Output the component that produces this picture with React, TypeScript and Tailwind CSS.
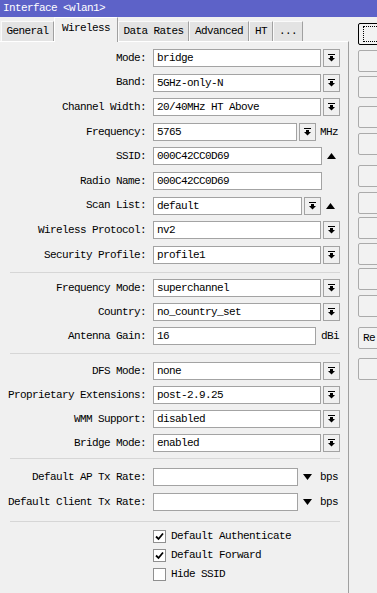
import React from 'react';

const FONT = "font-['Liberation_Mono',monospace] text-[11px] tracking-[-0.6px]";

const TABS = [
  { label: 'General', width: 'w-[53px]' },
  { label: 'Wireless', width: 'w-[64px]', active: true },
  { label: 'Data Rates', width: 'w-[71px]' },
  { label: 'Advanced', width: 'w-[60px]' },
  { label: 'HT', width: 'w-[24px]' },
  { label: '...', width: 'w-[30px]' },
];

// right-hand button column; only the start of "Reset" fits inside the window
const SIDE_BUTTONS = [
  { name: 'OK', mt: 'mt-[6px]', focused: true },
  { name: 'Cancel', mt: 'mt-[5px]' },
  { name: 'Apply', mt: 'mt-[4px]' },
  { name: 'Disable', mt: 'mt-[8px]' },
  { name: 'Comment', mt: 'mt-[5px]' },
  { name: 'Advanced Mode', mt: 'mt-[10px]' },
  { name: 'Torch', mt: 'mt-[5px]' },
  { name: 'Scan', mt: 'mt-[3px]' },
  { name: 'Freq. Usage', mt: 'mt-[4px]' },
  { name: 'Align', mt: 'mt-[3px]' },
  { name: 'Sniff', mt: 'mt-[5px]' },
  { name: 'Reset Configuration', mt: 'mt-[10px]', text: 'Re' },
  { name: 'Snooper', mt: 'mt-[9px]' },
];

const DropIcon = () => (
  <svg width="7" height="8" viewBox="0 0 7 8">
    <rect x="0" y="0" width="7" height="1" fill="#000" />
    <rect x="2" y="2" width="3" height="2" fill="#000" />
    <polygon points="0,4 7,4 3.5,7.5" fill="#000" />
  </svg>
);

const UpTriangle = () => (
  <svg width="9" height="6" viewBox="0 0 9 6">
    <polygon points="4.5,0 9,6 0,6" fill="#000" />
  </svg>
);

const DownTriangle = () => (
  <svg width="9" height="6" viewBox="0 0 9 6">
    <polygon points="0,0 9,0 4.5,6" fill="#000" />
  </svg>
);

const Row: React.FC<{ label: string; children: React.ReactNode }> = ({ label, children }) => (
  <div className="flex items-center h-[18px]">
    <div className="w-[146px] shrink-0 text-right whitespace-nowrap">{label}:</div>
    <div className="ml-[7px] flex items-center">{children}</div>
  </div>
);

const Field: React.FC<{ value?: string; width: string }> = ({ value = '', width }) => (
  <div className={`${width} h-[18px] border border-[#a3a3a3] bg-white pl-[3px] leading-[16px] whitespace-nowrap overflow-hidden`}>
    {value}
  </div>
);

const DropButton = () => (
  <div className="ml-[2px] w-[17px] h-[18px] border border-[#a3a3a3] bg-[#f0f0f0] flex items-center justify-center">
    <DropIcon />
  </div>
);

const Select: React.FC<{ value: string }> = ({ value }) => (
  <>
    <Field value={value} width="w-[168px]" />
    <DropButton />
  </>
);

const Separator: React.FC<{ className: string }> = ({ className }) => (
  <div className={`ml-[10px] w-[330px] h-px bg-[#d6d6d6] ${className}`} />
);

const Checkbox: React.FC<{ label: string; checked?: boolean }> = ({ label, checked }) => (
  <div className="flex items-center h-[13px] pl-[153px]">
    <div className="w-[13px] h-[13px] border border-[#8f8f8f] bg-white flex items-center justify-center">
      {checked && (
        <svg width="9" height="9" viewBox="0 0 9 9">
          <path d="M1 4.5 L3.5 7 L8 1.5" stroke="#000" strokeWidth="1.8" fill="none" />
        </svg>
      )}
    </div>
    <span className="ml-[5px] whitespace-nowrap">{label}</span>
  </div>
);

export default function App() {
  return (
    <div className={`w-[377px] h-[593px] overflow-hidden bg-[#f0f0f0] text-black ${FONT}`}>
      <div className="h-[17px] bg-[#5d62c8] text-white pl-[3px] leading-[17px] whitespace-nowrap">
        Interface &lt;wlan1&gt;
      </div>

      <div className="flex">
        <div className="w-[349px] shrink-0">
          {/* tab strip */}
          <div className="h-[24px] flex items-end pl-[1px]">
            {TABS.map(tab =>
              tab.active ? (
                <div
                  key={tab.label}
                  className={`${tab.width} h-[25px] -mb-px relative z-10 bg-[#f0f0f0] border-l border-t border-white border-r border-r-[#a0a0a0] flex items-center justify-center pb-[3px] whitespace-nowrap`}
                >
                  {tab.label}
                </div>
              ) : (
                <div
                  key={tab.label}
                  className={`${tab.width} h-[20px] bg-[#e3e3e3] border-l border-t border-[#fafafa] border-r border-r-[#a0a0a0] flex items-center justify-center whitespace-nowrap`}
                >
                  {tab.label}
                </div>
              )
            )}
          </div>

          {/* tab panel */}
          <div className="h-[552px] border-t border-white border-r border-r-[#a0a0a0] pt-[7px]">
            <div className="flex flex-col gap-[6.6px]">
              <Row label="Mode"><Select value="bridge" /></Row>
              <Row label="Band"><Select value="5GHz-only-N" /></Row>
              <Row label="Channel Width"><Select value="20/40MHz HT Above" /></Row>
              <Row label="Frequency">
                <Field value="5765" width="w-[144px]" />
                <DropButton />
                <span className="ml-[4px]">MHz</span>
              </Row>
              <Row label="SSID">
                <Field value="000C42CC0D69" width="w-[169px]" />
                <span className="ml-[5px] flex"><UpTriangle /></span>
              </Row>
              <Row label="Radio Name"><Field value="000C42CC0D69" width="w-[169px]" /></Row>
              <Row label="Scan List">
                <Field value="default" width="w-[149px]" />
                <DropButton />
                <span className="ml-[5px] flex"><UpTriangle /></span>
              </Row>
              <Row label="Wireless Protocol"><Select value="nv2" /></Row>
              <Row label="Security Profile"><Select value="profile1" /></Row>
            </div>

            <Separator className="mt-[8px] mb-[6px]" />

            <div className="flex flex-col gap-[6px]">
              <Row label="Frequency Mode"><Select value="superchannel" /></Row>
              <Row label="Country"><Select value="no_country_set" /></Row>
              <Row label="Antenna Gain">
                <Field value="16" width="w-[163px]" />
                <span className="ml-[5px]">dBi</span>
              </Row>
            </div>

            <Separator className="mt-[8px] mb-[8px]" />

            <div className="flex flex-col gap-[6px]">
              <Row label="DFS Mode"><Select value="none" /></Row>
              <Row label="Proprietary Extensions"><Select value="post-2.9.25" /></Row>
              <Row label="WMM Support"><Select value="disabled" /></Row>
              <Row label="Bridge Mode"><Select value="enabled" /></Row>
            </div>

            <Separator className="mt-[6px] mb-[9px]" />

            <div className="flex flex-col gap-[7px]">
              <Row label="Default AP Tx Rate">
                <Field width="w-[145px]" />
                <span className="ml-[5px] flex"><DownTriangle /></span>
                <span className="ml-[8px]">bps</span>
              </Row>
              <Row label="Default Client Tx Rate">
                <Field width="w-[145px]" />
                <span className="ml-[5px] flex"><DownTriangle /></span>
                <span className="ml-[8px]">bps</span>
              </Row>
            </div>

            <Separator className="mt-[10px] mb-[8px]" />

            <div className="flex flex-col gap-[6px]">
              <Checkbox label="Default Authenticate" checked />
              <Checkbox label="Default Forward" checked />
              <Checkbox label="Hide SSID" />
            </div>
          </div>
        </div>

        {/* side buttons */}
        <div className="ml-[9px] flex flex-col">
          {SIDE_BUTTONS.map(btn => (
            <div
              key={btn.name}
              aria-label={btn.name}
              className={`${btn.mt} w-[140px] h-[22px] shrink-0 rounded-[2px] border bg-[#f2f2f2] flex items-center pl-[4px] whitespace-nowrap ${
                btn.focused ? 'border-black p-[2px]' : 'border-[#ababab]'
              }`}
            >
              {btn.focused ? <div className="w-full h-full border border-dotted border-black" /> : btn.text}
            </div>
          ))}
        </div>
      </div>
    </div>
  );
}
